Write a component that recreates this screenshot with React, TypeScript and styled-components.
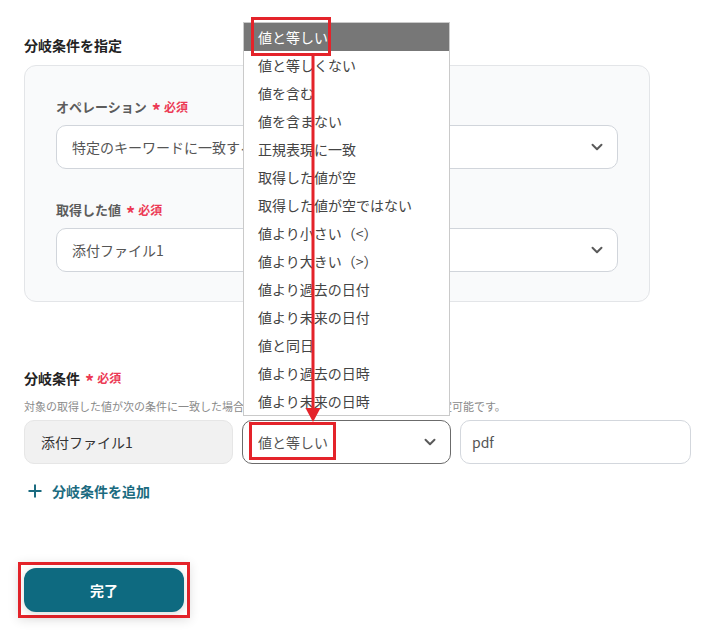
import React from 'react';
import styled, { createGlobalStyle } from 'styled-components';

const GlobalStyle = createGlobalStyle`
  html, body {
    margin: 0;
    padding: 0;
    background: #ffffff;
  }
  body {
    font-family: 'Noto Sans CJK JP', 'Noto Sans', sans-serif;
    color: #222;
  }
`;

const Page = styled.div`
  position: relative;
  width: 712px;
  height: 637px;
  box-sizing: border-box;
  padding: 35px 21px 0 24px;
  overflow: hidden;
  display: flex;
  flex-direction: column;
  align-items: flex-start;
`;

const SectionTitle = styled.div`
  font-size: 14px;
  line-height: 20px;
  font-weight: 700;
  color: #222;
  display: flex;
  align-items: center;
  gap: 5px;
`;

const Card = styled.div`
  width: 626px;
  box-sizing: border-box;
  margin-top: 10px;
  padding: 31px 31px 29px;
  background: #f9fafb;
  border: 1px solid #e3e5e8;
  border-radius: 12px;
  display: flex;
  flex-direction: column;
`;

const Field = styled.div<{ $first?: boolean }>`
  display: flex;
  flex-direction: column;
  gap: 8px;
  margin-top: ${(p) => (p.$first ? '0' : '31px')};
`;

const Label = styled.div`
  font-size: 13px;
  line-height: 20px;
  font-weight: 700;
  color: #5c5c5c;
  display: flex;
  align-items: center;
  gap: 5px;
`;

const Required = styled.span`
  color: #ec3a55;
  font-size: 12px;
  font-weight: 700;
  display: inline-flex;
  align-items: center;
  gap: 3px;
`;

const Star = styled.span`
  font-size: 18px;
  line-height: 12px;
  position: relative;
  top: 3px;
`;

const SelectBox = styled.div<{ $focused?: boolean }>`
  position: relative;
  height: 44px;
  box-sizing: border-box;
  border: 1px solid ${(p) => (p.$focused ? '#6b6b6b' : '#d1d5db')};
  border-radius: 10px;
  background: #ffffff;
  display: flex;
  align-items: center;
  justify-content: space-between;
  padding: 0 11px 0 15px;
  font-size: 14px;
  color: #555;
`;

const SelectText = styled.span`
  white-space: nowrap;
  overflow: hidden;
`;

const Chevron = styled.svg`
  flex: none;
  width: 18px;
  height: 18px;
  color: #5a5a5a;
`;

const ConditionHeader = styled(SectionTitle)`
  margin-top: 66px;
`;

const Help = styled.div`
  margin-top: 10px;
  font-size: 11px;
  line-height: 16px;
  color: #8a8a8a;
  white-space: nowrap;
`;

const ConditionRow = styled.div`
  margin-top: 6px;
  display: grid;
  grid-template-columns: 209px 209px 231px;
  gap: 9px;
`;

const StaticInput = styled.div<{ $muted?: boolean }>`
  height: 44px;
  box-sizing: border-box;
  border: 1px solid ${(p) => (p.$muted ? '#e6e6e6' : '#d3d7dd')};
  border-radius: 10px;
  background: ${(p) => (p.$muted ? '#f1f1f1' : '#ffffff')};
  display: flex;
  align-items: center;
  padding: 0 ${(p) => (p.$muted ? '16px' : '11px')};
  font-size: 14px;
  color: ${(p) => (p.$muted ? '#333' : '#555')};
`;

const Menu = styled.ul`
  position: absolute;
  left: 0;
  right: 0;
  bottom: calc(100% + 5px);
  margin: 0;
  padding: 0;
  list-style: none;
  background: #ffffff;
  border: 1px solid #cacaca;
  z-index: 2;
`;

const MenuItem = styled.li<{ $active?: boolean }>`
  height: 28px;
  line-height: 28px;
  padding-left: 14px;
  font-size: 14px;
  white-space: nowrap;
  color: ${(p) => (p.$active ? '#ffffff' : '#444')};
  background: ${(p) => (p.$active ? '#777777' : 'transparent')};
`;

const AddLink = styled.div`
  margin-top: 17px;
  display: flex;
  align-items: center;
  gap: 10px;
  padding-left: 4px;
  font-size: 14px;
  line-height: 20px;
  font-weight: 700;
  color: #1b6b80;
`;

const Highlight = styled.div`
  margin-top: 61px;
  margin-left: -6px;
  padding: 3px;
  border: 3px solid #e4232a;
  box-shadow: 0 2px 10px rgba(0, 0, 0, 0.12);
  display: flex;
`;

const Submit = styled.button`
  width: 160px;
  height: 44px;
  border: none;
  border-radius: 12px;
  background: #0e6a80;
  color: #ffffff;
  font-family: inherit;
  font-size: 14px;
  font-weight: 700;
  box-shadow: 0 2px 8px rgba(0, 0, 0, 0.15);
`;

const Annotations = styled.svg`
  position: absolute;
  left: 0;
  top: 0;
  width: 712px;
  height: 637px;
  pointer-events: none;
  z-index: 3;
`;

const options = [
  '値と等しい',
  '値と等しくない',
  '値を含む',
  '値を含まない',
  '正規表現に一致',
  '取得した値が空',
  '取得した値が空ではない',
  '値より小さい（<）',
  '値より大きい（>）',
  '値より過去の日付',
  '値より未来の日付',
  '値と同日',
  '値より過去の日時',
  '値より未来の日時',
];

const ChevronIcon = () => (
  <Chevron viewBox="0 0 24 24" fill="none" stroke="currentColor" strokeWidth="2.6" strokeLinecap="round" strokeLinejoin="round">
    <path d="m6 9 6 6 6-6" />
  </Chevron>
);

const RequiredMark = () => (
  <Required>
    <Star>*</Star>必須
  </Required>
);

export default function App() {
  return (
    <>
      <GlobalStyle />
      <Page>
        <SectionTitle>分岐条件を指定</SectionTitle>
        <Card>
          <Field $first>
            <Label>
              オペレーション <RequiredMark />
            </Label>
            <SelectBox>
              <SelectText>特定のキーワードに一致する場合</SelectText>
              <ChevronIcon />
            </SelectBox>
          </Field>
          <Field>
            <Label>
              取得した値 <RequiredMark />
            </Label>
            <SelectBox>
              <SelectText>添付ファイル1</SelectText>
              <ChevronIcon />
            </SelectBox>
          </Field>
        </Card>

        <ConditionHeader>
          分岐条件 <RequiredMark />
        </ConditionHeader>
        <Help>対象の取得した値が次の条件に一致した場合、以降の処理に進みます。条件は複数設定可能です。</Help>
        <ConditionRow>
          <StaticInput $muted>添付ファイル1</StaticInput>
          <SelectBox $focused>
            <SelectText>値と等しい</SelectText>
            <ChevronIcon />
            <Menu>
              {options.map((o, i) => (
                <MenuItem key={o} $active={i === 0}>
                  {o}
                </MenuItem>
              ))}
            </Menu>
          </SelectBox>
          <StaticInput>pdf</StaticInput>
        </ConditionRow>

        <AddLink>
          <svg width="14" height="14" viewBox="0 0 14 14" fill="none" stroke="currentColor" strokeWidth="2">
            <path d="M7 0.5v13M0.5 7h13" />
          </svg>
          分岐条件を追加
        </AddLink>

        <Highlight>
          <Submit type="button">完了</Submit>
        </Highlight>

        <Annotations viewBox="0 0 712 637">
          <rect x="252.5" y="18.5" width="77" height="36" fill="none" stroke="#e4232a" strokeWidth="3" />
          <line x1="313" y1="55" x2="313" y2="410" stroke="#e4232a" strokeWidth="3" />
          <polygon points="305.5,408 320.5,408 313,422" fill="#e4232a" />
          <rect x="250.5" y="423.5" width="84" height="35" fill="none" stroke="#e4232a" strokeWidth="3" />
        </Annotations>
      </Page>
    </>
  );
}
